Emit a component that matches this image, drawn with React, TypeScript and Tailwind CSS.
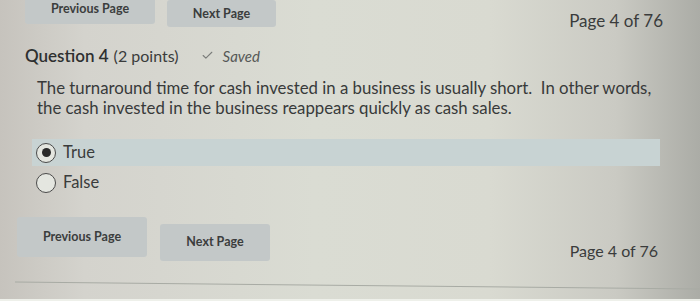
import { Check } from 'lucide-react'

function NavButton({ label, className }: { label: string; className: string }) {
  return (
    <div
      className={`flex items-center justify-center rounded-[3px] bg-[#c3c8c8] text-[12.5px] font-bold text-[#3b3d3d] ${className}`}
    >
      {label}
    </div>
  )
}

function Radio({ checked }: { checked: boolean }) {
  return (
    <span className="flex h-[20px] w-[20px] items-center justify-center rounded-full border-[1.5px] border-[#4a4a4a] bg-[#e4e6e0]">
      {checked && <span className="h-[9px] w-[9px] rounded-full bg-[#2a2a2a]" />}
    </span>
  )
}

export default function App() {
  return (
    <div
      className="relative h-[301px] w-[700px] overflow-hidden bg-[linear-gradient(90deg,#c6c3bd_0%,#d4d3cd_12%,#dadcd3_45%,#d9dad1_70%,#cacac3_88%,#abaca6_100%)] text-[#363838]"
      style={{ fontFamily: 'Lato, "Noto Sans", sans-serif' }}
    >
      {/* top nav */}
      <div className="flex items-start pl-[25px] pr-[37px]">
        <NavButton label="Previous Page" className="-mt-[4px] h-[28px] w-[130px] pb-[2px]" />
        <NavButton label="Next Page" className="ml-[12px] h-[27px] w-[109px] pt-[1px]" />
        <div className="ml-auto pt-[8px] text-[17px] text-[#3a3c3c]">Page 4 of 76</div>
      </div>

      {/* question header */}
      <div className="mt-[9px] flex items-baseline pl-[25px]">
        <span className="text-[17px] font-semibold text-[#2e3030]">Question 4</span>
        <span className="ml-[5px] text-[16px] text-[#3a3c3c]">(2 points)</span>
        <Check className="ml-[22px] h-[13px] w-[13px] self-center text-[#7a7c7a]" strokeWidth={2} />
        <span className="ml-[9px] text-[15px] italic text-[#555856]">Saved</span>
      </div>

      {/* question text */}
      <p className="mt-[10px] whitespace-nowrap pl-[37px] text-[16.8px] leading-[20px] text-[#383a3a]">
        The turnaround time for cash invested in a business is usually short.&nbsp; In other words,
        <br />
        the cash invested in the business reappears quickly as cash sales.
      </p>

      {/* answers */}
      <div className="ml-[32px] mr-[40px] mt-[21px] flex flex-col">
        <label className="flex h-[27px] items-center gap-[7px] bg-[#c8d3d3] pl-[4px] text-[16.5px] text-[#3a3c3c]">
          <Radio checked />
          True
        </label>
        <label className="mt-[3px] flex h-[27px] items-center gap-[7px] pl-[4px] text-[16.5px] text-[#3a3c3c]">
          <Radio checked={false} />
          False
        </label>
      </div>

      {/* bottom nav */}
      <div className="mt-[21px] flex items-start pl-[17px] pr-[42px]">
        <NavButton label="Previous Page" className="h-[40px] w-[130px]" />
        <NavButton label="Next Page" className="ml-[13px] mt-[7px] h-[37px] w-[110px]" />
        <div className="ml-auto pt-[22px] text-[16px] text-[#3a3c3c]">Page 4 of 76</div>
      </div>

      <div className="ml-[15px] mt-[22px] h-[1px] rotate-[0.6deg] bg-[#a8aba4]" />
      <div className="absolute bottom-0 left-0 h-[2px] w-full bg-[#eef0ea]" />
    </div>
  )
}
